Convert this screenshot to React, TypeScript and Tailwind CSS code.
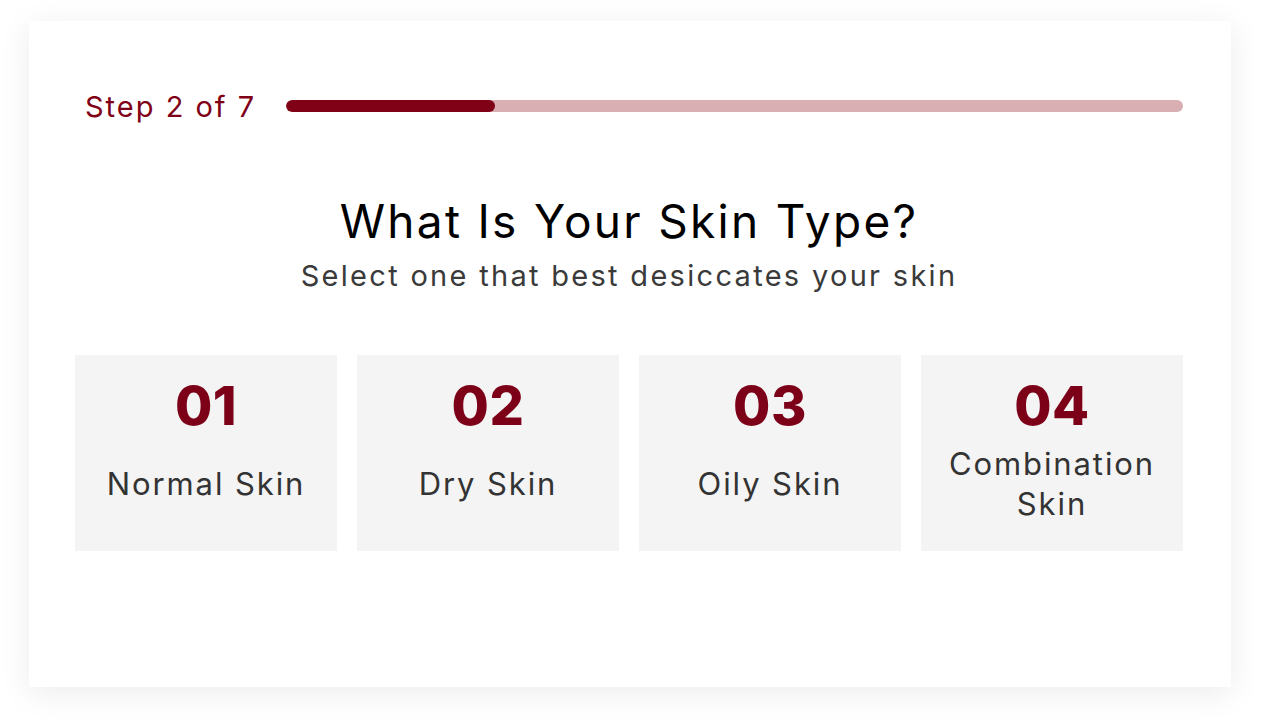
import React from "react";

const items = [
  { n: "01", label: "Normal Skin" },
  { n: "02", label: "Dry Skin" },
  { n: "03", label: "Oily Skin" },
  { n: "04", label: "Combination Skin" },
];

export default function App() {
  return (
    <div
      className="w-[1261px] h-[725px] bg-white pl-[29px] pr-[30px] pt-[21px]"
      style={{ fontFamily: "Inter, 'Open Sans', sans-serif" }}
    >
      <div className="h-[666px] bg-white shadow-[0_6px_30px_rgba(0,0,0,0.08)] pl-[46px] pr-[48px] pt-[68px]">
        <div className="flex items-center pl-[10px] h-[34px]">
          <span className="text-[29px] leading-none text-[#7f0016] tracking-[2px]">Step 2 of 7</span>
          <div className="ml-[30px] flex-1 h-[12px] rounded-full bg-[#d9afb3] overflow-hidden">
            <div className="h-full w-[209px] rounded-full bg-[#800016]" />
          </div>
        </div>
        <h1 className="mt-[72px] text-center text-[46px] leading-[52px] text-black font-normal tracking-[2.3px]">
          What Is Your Skin Type?
        </h1>
        <p className="mt-[11px] text-center text-[29px] leading-[36px] text-[#3a3a3a] tracking-[2.3px]">
          Select one that best desiccates your skin
        </p>
        <div className="mt-[61px] grid grid-cols-4 gap-[20px]">
          {items.map((it) => (
            <div
              key={it.n}
              className="h-[196px] bg-[#f4f4f4] flex flex-col items-center pt-[24px]"
            >
              <div className="text-[54px] leading-[54px] font-extrabold text-[#7c0018] tracking-[0.5px]">{it.n}</div>
              <div className="mt-[6px] h-[90px] w-full flex items-center justify-center text-center text-[31px] leading-[40px] text-[#333] px-6 tracking-[1.9px]">
                {it.label}
              </div>
            </div>
          ))}
        </div>
      </div>
    </div>
  );
}
